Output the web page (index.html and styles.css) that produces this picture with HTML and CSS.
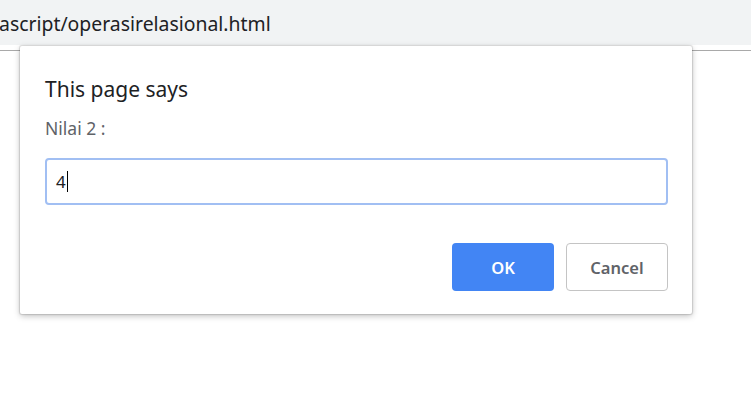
FILE: index.html
```html
<!DOCTYPE html>
<html>
<head>
<meta charset="utf-8">
<link rel="stylesheet" href="styles.css">
</head>
<body>
<div class="urlbar"><span class="url">ascript/operasirelasional.html</span></div>
<div class="divider"></div>
<div class="page"></div>
<div class="dialog">
  <div class="title">This page says</div>
  <div class="label">Nilai 2 :</div>
  <div class="input"><span class="value">4</span><span class="caret"></span></div>
  <div class="actions">
    <button class="btn ok">OK</button>
    <button class="btn cancel">Cancel</button>
  </div>
</div>
</body>
</html>
```
FILE: styles.css
```css
html, body {
  margin: 0;
  padding: 0;
  background: #ffffff;
  font-family: "Noto Sans", "Open Sans", sans-serif;
  width: 751px;
  height: 419px;
  overflow: hidden;
}
.urlbar {
  height: 45px;
  background: #f1f3f4;
  display: flex;
  align-items: center;
}
.url {
  font-size: 19.4px;
  color: #202124;
  margin-left: -1px;
  margin-top: 1px;
}
.divider {
  margin-top: 5px;
  height: 1px;
  background: #a9a9a9;
}
.dialog {
  position: absolute;
  left: 20px;
  top: 46px;
  width: 672px;
  height: 268px;
  box-sizing: border-box;
  background: #fff;
  border-radius: 2px;
  box-shadow: 0 0 1px 1px rgba(0,0,0,0.12), 0 2px 6px rgba(0,0,0,0.25);
  padding: 29px 24px 0 25px;
}
.title {
  font-size: 21px;
  line-height: 28px;
  color: #202124;
}
.label {
  margin-top: 14px;
  font-size: 17.5px;
  line-height: 22px;
  color: #5f6368;
}
.input {
  margin-top: 19px;
  height: 47px;
  box-sizing: border-box;
  border: 2px solid #a1bff3;
  border-radius: 4px;
  display: flex;
  align-items: center;
  padding-left: 9px;
}
.value {
  font-size: 17px;
  color: #202124;
}
.caret {
  width: 1px;
  height: 21px;
  background: #000;
  margin-left: 1px;
}
.actions {
  margin-top: 38px;
  display: flex;
  justify-content: flex-end;
  gap: 12px;
}
.btn {
  width: 102px;
  height: 48px;
  border-radius: 4px;
  font-family: "Noto Sans", "Open Sans", sans-serif;
  font-size: 16.5px;
  font-weight: 600;
  cursor: pointer;
}
.ok {
  background: #4285f4;
  color: #fff;
  border: none;
}
.cancel {
  background: #fff;
  color: #5f6368;
  border: 1px solid #c4c4c4;
}
```
